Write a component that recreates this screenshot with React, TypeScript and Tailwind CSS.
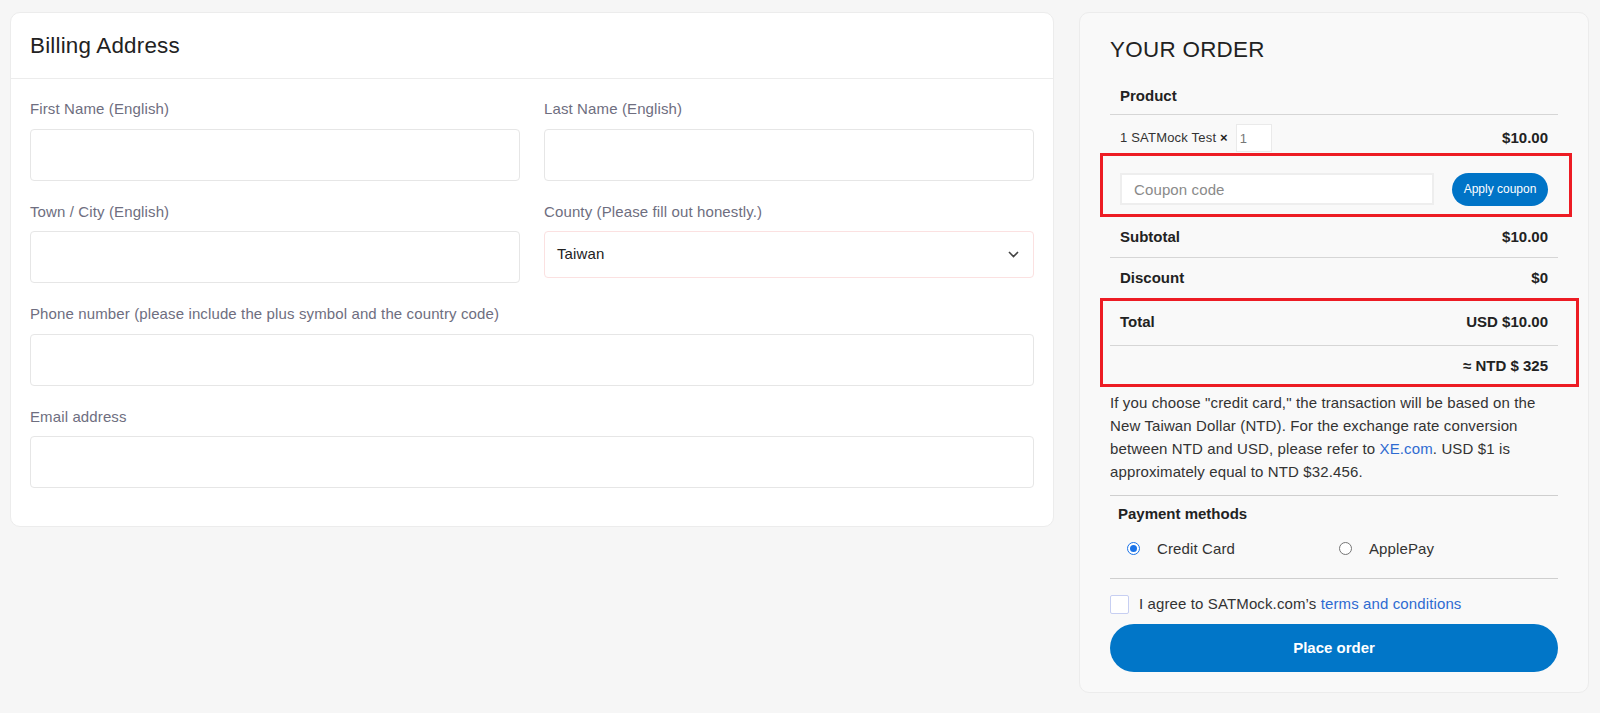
import React from 'react';

const labelCls = 'block text-[15px] leading-[22.5px] tracking-[0.12px] text-[#6e6e80] mb-[8px]';
const inputCls = 'w-full h-[52px] rounded-[4px] border border-[#e6e6e6] bg-white px-3 text-[15px] outline-none';

function Field({ label, wide }: { label: string; wide?: boolean }) {
  return (
    <div className={wide ? 'col-span-2' : ''}>
      <label className={labelCls}>{label}</label>
      <input className={inputCls} />
    </div>
  );
}

function Radio({ checked }: { checked?: boolean }) {
  if (checked) {
    return (
      <span className="w-[13px] h-[13px] rounded-full border-[1.5px] border-[#1a73e8] bg-white flex items-center justify-center shrink-0">
        <span className="w-[7px] h-[7px] rounded-full bg-[#1a73e8]" />
      </span>
    );
  }
  return <span className="w-[13px] h-[13px] rounded-full border border-[#767676] bg-white shrink-0" />;
}

export default function App() {
  return (
    <div className="min-h-[713px] bg-[#f6f6f6] font-['Liberation_Sans',Arial,sans-serif] pt-[12px] pl-[10px] pr-[11px] flex items-start gap-[25px]">
      {/* billing */}
      <div className="flex-1 bg-white border border-[#ececec] rounded-[10px]">
        <div className="px-[19px] py-[19px] border-b border-[#ececec]">
          <h2 className="text-[22.4px] leading-[27px] tracking-[0.2px] text-[#222]">Billing Address</h2>
        </div>
        <div className="px-[19px] pt-[19px] pb-[38px] grid grid-cols-2 gap-x-[24px] gap-y-[20px]">
          <Field label="First Name (English)" />
          <Field label="Last Name (English)" />
          <Field label="Town / City (English)" />
          <div>
            <label className={labelCls}>County (Please fill out honestly.)</label>
            <div className="h-[47px] rounded-[4px] border border-[#fbe1e1] bg-white flex items-center justify-between pl-[12px] pr-[14px]">
              <span className="text-[15px] tracking-[0.12px] text-[#222]">Taiwan</span>
              <svg width="11" height="7" viewBox="0 0 11 7" fill="none">
                <path d="M1 1l4.5 4.5L10 1" stroke="#444" strokeWidth="1.6" />
              </svg>
            </div>
          </div>
          <Field label="Phone number (please include the plus symbol and the country code)" wide />
          <Field label="Email address" wide />
        </div>
      </div>

      {/* order */}
      <div className="w-[510px] shrink-0 bg-[#f9f9f9] border border-[#ececec] rounded-[10px] pt-[23px] px-[30px] pb-[20px] text-[#222]">
        <h2 className="text-[22.4px] leading-[27px] tracking-[0.3px] mb-[15px]">YOUR ORDER</h2>

        <div className="h-[37px] px-[10px] flex items-center border-b border-[#d6d6d6] text-[15px] font-bold">Product</div>

        <div className="h-[46px] px-[10px] flex items-center justify-between">
          <div className="flex items-center text-[13px] tracking-[0.2px] text-[#333]">
            <span>1 SATMock Test <b className="text-[#222]">×</b></span>
            <input defaultValue="1" className="ml-[8px] w-[36px] h-[28px] bg-white border border-[#eaeaea] px-[3px] text-[13px] text-[#777] outline-none" />
          </div>
          <span className="text-[15px] font-bold">$10.00</span>
        </div>

        <div className="relative h-[56px] px-[10px] flex items-center justify-between">
          <input placeholder="Coupon code" className="w-[314px] h-[32px] bg-white border-2 border-[#eeeeee] pl-[12px] text-[15px] tracking-[0.12px] placeholder:text-[#8a8a8a] outline-none" />
          <button className="h-[33px] w-[96px] rounded-full bg-[#0074c7] text-white text-[12px]">Apply coupon</button>
          <div className="absolute -top-[8px] bottom-0 -left-[10px] -right-[14px] border-[3px] border-[#ed1c24] pointer-events-none" />
        </div>

        <div className="h-[41px] px-[10px] flex items-center justify-between border-b border-[#d6d6d6] text-[15px] font-bold">
          <span>Subtotal</span>
          <span>$10.00</span>
        </div>
        <div className="h-[41px] px-[10px] flex items-center justify-between border-b border-[#d6d6d6] text-[15px] font-bold">
          <span>Discount</span>
          <span>$0</span>
        </div>

        <div className="relative">
          <div className="h-[47px] px-[10px] flex items-center justify-between border-b border-[#d6d6d6] text-[15px] font-bold">
            <span>Total</span>
            <span>USD $10.00</span>
          </div>
          <div className="h-[41px] px-[10px] flex items-center justify-end text-[15px] font-bold">≈ NTD $ 325</div>
          <div className="absolute -top-[1px] bottom-0 -left-[10px] -right-[21px] border-[3px] border-[#ed1c24] pointer-events-none" />
        </div>

        <p className="mt-[4px] text-[15px] leading-[23px] tracking-[0.12px] text-[#333]">
          If you choose "credit card," the transaction will be based on the New Taiwan Dollar (NTD). For the exchange rate
          conversion between NTD and USD, please refer to <a className="text-[#2e6bd1]">XE.com</a>. USD $1 is approximately
          equal to NTD $32.456.
        </p>

        <div className="mt-[12px] border-t border-[#cfcfcf]" />
        <div className="mt-[7px] pl-[8px] text-[15px] leading-[22.5px] font-bold">Payment methods</div>
        <div className="mt-[12px] pl-[17px] flex items-center text-[15px] leading-[22.5px] tracking-[0.12px] text-[#333]">
          <label className="w-[212px] flex items-center gap-[17px]">
            <Radio checked />
            Credit Card
          </label>
          <label className="flex items-center gap-[17px]">
            <Radio />
            ApplePay
          </label>
        </div>
        <div className="mt-[18px] border-t border-[#cfcfcf]" />

        <div className="mt-[13px] h-[24px] flex items-center gap-[10px] text-[15px] tracking-[0.12px] text-[#333]">
          <span className="w-[19px] h-[19px] border border-[#c7cff2] bg-white rounded-[2px] shrink-0" />
          <span>
            I agree to SATMock.com’s <a className="text-[#2e6bd1]">terms and conditions</a>
          </span>
        </div>

        <button className="mt-[8px] w-full h-[48px] rounded-full bg-[#0176c8] text-white text-[15px] font-bold">Place order</button>
      </div>
    </div>
  );
}
